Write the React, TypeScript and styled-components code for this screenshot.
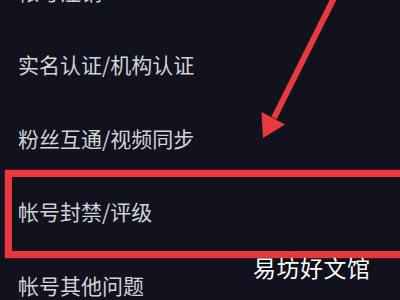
import styled, { createGlobalStyle } from "styled-components";

const GlobalStyle = createGlobalStyle`
  html, body {
    margin: 0;
    padding: 0;
    background: #11121d;
  }
`;

const Screen = styled.div`
  position: relative;
  width: 400px;
  height: 300px;
  overflow: hidden;
  background-color: #11121d;
  font-family: "Noto Sans CJK SC", "Noto Sans", sans-serif;
`;

const MenuList = styled.div`
  display: flex;
  flex-direction: column;
  margin-top: -46px;
`;

const MenuRow = styled.div<{ $highlighted?: boolean }>`
  position: relative;
  display: flex;
  align-items: center;
  height: 73.5px;
  padding-left: 18px;
  color: #d2d3d9;
  font-size: 21px;

  ${(p) =>
    p.$highlighted &&
    `
    &::after {
      content: "";
      position: absolute;
      top: -5px;
      bottom: -10px;
      left: 5px;
      right: -20px;
      border: 7px solid #e8383d;
      box-shadow: 0 0 2px rgba(232, 56, 61, 0.6);
    }
  `}
`;

const Watermark = styled.div`
  position: absolute;
  left: 253px;
  top: 250px;
  color: #ffffff;
  font-size: 23px;
  letter-spacing: 0.5px;
  text-shadow: 0 0 2px rgba(0, 0, 0, 0.6);
`;

const Arrow = styled.svg`
  position: absolute;
  left: 0;
  top: 0;
  width: 400px;
  height: 300px;
  pointer-events: none;
`;

const items = [
  "帐号注销",
  "实名认证/机构认证",
  "粉丝互通/视频同步",
  "帐号封禁/评级",
  "帐号其他问题",
];

export default function App() {
  return (
    <Screen>
      <GlobalStyle />
      <MenuList>
        {items.map((label, i) => (
          <MenuRow key={label} $highlighted={i === 3}>
            {label}
          </MenuRow>
        ))}
      </MenuList>
      <Arrow viewBox="0 0 400 300">
        <line
          x1="336"
          y1="-6"
          x2="274"
          y2="118"
          stroke="#e8393c"
          strokeWidth="6"
        />
        <polygon points="263,138 261.5,112 285,124.5" fill="#e8393c" />
      </Arrow>
      <Watermark>易坊好文馆</Watermark>
    </Screen>
  );
}
